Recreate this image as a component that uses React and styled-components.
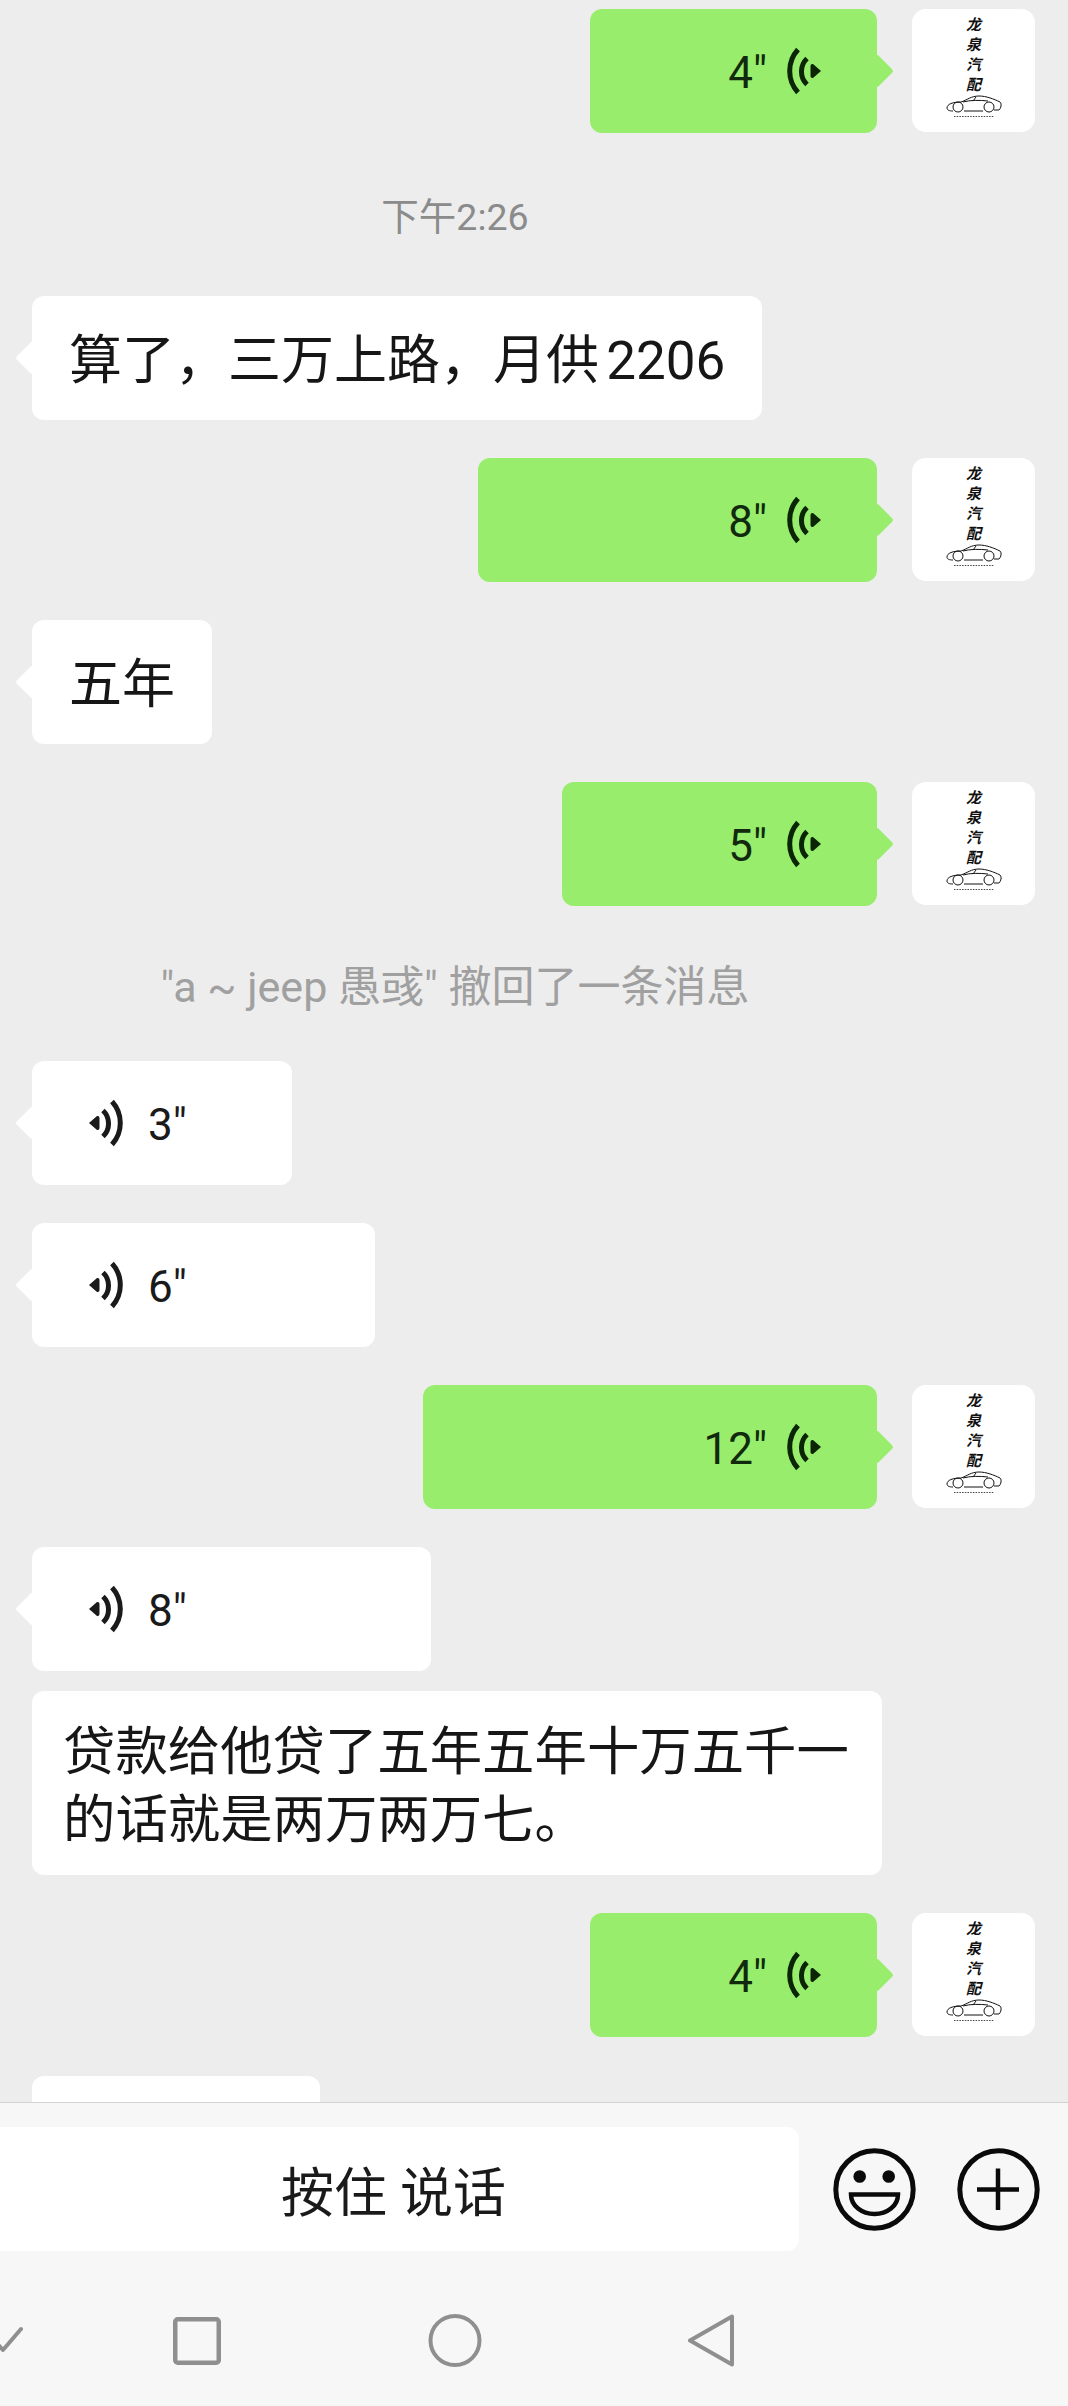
import React from "react";
import styled, { createGlobalStyle } from "styled-components";

const Global = createGlobalStyle`
  html, body { margin: 0; padding: 0; background: #ededed; }
  * { box-sizing: border-box; }
`;

const FONT = `Roboto, "Noto Sans CJK SC", sans-serif`;

const Page = styled.div`
  width: 1068px;
  height: 2406px;
  display: flex;
  flex-direction: column;
  overflow: hidden;
  background: #ededed;
  font-family: ${FONT};
  color: #161616;
`;

const Chat = styled.div`
  height: 2102px;
  flex: none;
  overflow: hidden;
  padding: 9px 33px 0 32px;
  display: flex;
  flex-direction: column;
`;

const Row = styled.div`
  flex: none;
  display: flex;
  justify-content: ${(p) => (p.$mine ? "flex-end" : "flex-start")};
  gap: 35px;
  margin-top: ${(p) => p.$top ?? 38}px;
`;

const Bubble = styled.div`
  position: relative;
  flex: none;
  height: ${(p) => p.$h ?? 124}px;
  width: ${(p) => (p.$w ? `${p.$w}px` : "auto")};
  border-radius: 12px;
  background: ${(p) => (p.$mine ? "#98ed6c" : "#ffffff")};
  display: flex;
  align-items: center;
  justify-content: ${(p) => (p.$mine ? "flex-end" : "flex-start")};
  padding: ${(p) => (p.$mine ? "0 56px 0 0" : "0 0 0 57px")};

  &::after {
    content: "";
    position: absolute;
    top: 50%;
    ${(p) => (p.$mine ? "right: -12px;" : "left: -12px;")}
    width: 24px;
    height: 24px;
    margin-top: -12px;
    border-radius: 3px;
    transform: rotate(45deg);
    background: inherit;
  }
`;

const TextBubble = styled(Bubble)`
  padding: 6px 37px 0 37px;
  font-size: 53px;
  line-height: 68px;
  word-spacing: -6px;
  white-space: nowrap;
`;

const LongBubble = styled.div`
  flex: none;
  width: 850px;
  height: 184px;
  padding: 27px 30px 0 31px;
  border-radius: 12px;
  background: #ffffff;
  font-size: 52.4px;
  line-height: 68px;
`;

const Duration = styled.span`
  font-size: 44px;
  font-weight: 400;
  line-height: 1;
  margin-top: 3px;
  color: ${(p) => (p.$mine ? "#11290c" : "#1a1a1a")};
`;

const VoiceSvg = styled.svg`
  flex: none;
  width: 34px;
  height: 48px;
  margin: ${(p) => (p.$mine ? "0 0 0 20px" : "0 25px 0 0")};
  transform: ${(p) => (p.$mine ? "scaleX(-1)" : "none")};
  color: ${(p) => (p.$mine ? "#0b2607" : "#1a1a1a")};
`;

const Avatar = styled.div`
  flex: none;
  width: 123px;
  height: 123px;
  border-radius: 14px;
  background: #ffffff;
  padding-top: 6px;
  display: flex;
  flex-direction: column;
  align-items: center;
  font-size: 15px;
  line-height: 20px;
  font-weight: 700;
  font-style: italic;
  color: #111111;
`;

const CarSvg = styled.svg`
  flex: none;
  width: 56px;
  height: 24px;
`;

const TimeStamp = styled.div`
  flex: none;
  margin: 59px 0 54px;
  text-align: center;
  padding-right: 157px;
  font-size: 37.5px;
  line-height: 50px;
  color: #8b8b8b;
`;

const Notice = styled.div`
  flex: none;
  margin: 56px 0 49px;
  text-align: center;
  padding-right: 157px;
  font-size: 43px;
  line-height: 50px;
  color: #a0a0a0;
`;

const InputBar = styled.div`
  flex: none;
  height: 149px;
  border-top: 1px solid #d2d2d2;
  background: #f7f7f7;
  padding-top: 24px;
  display: flex;
  align-items: flex-start;
`;

const HoldButton = styled.div`
  flex: none;
  width: 799px;
  height: 124px;
  background: #ffffff;
  border-radius: 0 12px 12px 0;
  display: flex;
  align-items: center;
  justify-content: center;
  padding-right: 12px;
  font-size: 53px;
  color: #1a1a1a;
`;

const RoundIcon = styled.svg`
  flex: none;
  width: 83px;
  height: 83px;
  margin-top: 21px;
  margin-left: ${(p) => p.$left}px;
`;

const NavBar = styled.div`
  flex: 1;
  background: #f7f7f7;
  padding-top: 63px;
  display: grid;
  grid-template-columns: 173px 255px 260px auto;
  align-items: center;
  align-content: start;
  justify-items: start;
`;

const NavSvg = styled.svg`
  display: block;
  width: ${(p) => p.$w}px;
  height: ${(p) => p.$h}px;
`;

function VoiceIcon({ mine }) {
  return (
    <VoiceSvg $mine={mine} viewBox="0 0 34 48">
      <path d="M0 24 L8 17 Q10.5 16.5 10.5 19 V29 Q10.5 31.5 8 31 Z" fill="currentColor" />
      <path d="M14 11.5 A18 18 0 0 1 14 37.5" fill="none" stroke="currentColor" strokeWidth="5" />
      <path d="M23 2.5 A32 32 0 0 1 23 45.5" fill="none" stroke="currentColor" strokeWidth="5" />
    </VoiceSvg>
  );
}

function Logo() {
  return (
    <Avatar>
      <span>龙</span>
      <span>泉</span>
      <span>汽</span>
      <span>配</span>
      <CarSvg viewBox="0 0 56 24">
        <g fill="none" stroke="#111" strokeWidth="1">
          <path d="M1 13 C1 9 7 7 15 7 C21 5 25 1 33 1 C40 1 48 4 54 7 C56 9 55 13 53 15 L48 15 M37 16 H18 M7 16 C3 16 1 15 1 13" />
          <path d="M17 7 C24 5 34 5 42 6 M30 2 L27 6" />
          <circle cx="12" cy="12" r="5" />
          <circle cx="43" cy="12" r="5" />
        </g>
        <path d="M8 21.5 H48" stroke="#444" strokeWidth="1.2" strokeDasharray="1.5 1.2" fill="none" />
      </CarSvg>
    </Avatar>
  );
}

function Sent({ w, sec, top }) {
  return (
    <Row $mine $top={top}>
      <Bubble $mine $w={w}>
        <Duration $mine>{sec}"</Duration>
        <VoiceIcon mine />
      </Bubble>
      <Logo />
    </Row>
  );
}

function Received({ w, sec, top }) {
  return (
    <Row $top={top}>
      <Bubble $w={w}>
        <VoiceIcon />
        <Duration>{sec}"</Duration>
      </Bubble>
    </Row>
  );
}

function Said({ children, top }) {
  return (
    <Row $top={top}>
      <TextBubble>{children}</TextBubble>
    </Row>
  );
}

export default function App() {
  return (
    <Page>
      <Global />
      <Chat>
        <Sent w={287} sec={4} top={0} />
        <TimeStamp>下午2:26</TimeStamp>
        <Said top={0}>算了，三万上路，月供 2206</Said>
        <Sent w={399} sec={8} />
        <Said>五年</Said>
        <Sent w={315} sec={5} />
        <Notice>"a ~ jeep 愚彧" 撤回了一条消息</Notice>
        <Received w={260} sec={3} top={0} />
        <Received w={343} sec={6} />
        <Sent w={454} sec={12} />
        <Received w={399} sec={8} />
        <Row $top={20}>
          <LongBubble>贷款给他贷了五年五年十万五千一的话就是两万两万七。</LongBubble>
        </Row>
        <Sent w={287} sec={4} />
        <Row $top={39}>
          <Bubble $w={288} />
        </Row>
      </Chat>
      <InputBar>
        <HoldButton>按住 说话</HoldButton>
        <RoundIcon $left={34} viewBox="0 0 83 83">
          <circle cx="41.5" cy="41.5" r="38.7" fill="none" stroke="#0a0a0a" strokeWidth="5" />
          <circle cx="26.7" cy="28.5" r="6.3" fill="#0a0a0a" />
          <circle cx="55.7" cy="28.5" r="6.3" fill="#0a0a0a" />
          <path d="M18 46.5 H65 C65 58 54 66 41.5 66 C29 66 18 58 18 46.5 Z" fill="none" stroke="#0a0a0a" strokeWidth="4.5" />
        </RoundIcon>
        <RoundIcon $left={41} viewBox="0 0 83 83">
          <circle cx="41.5" cy="41.5" r="38.7" fill="none" stroke="#0a0a0a" strokeWidth="5" />
          <path d="M20 41.5 H62 M41 20.5 V62" fill="none" stroke="#0a0a0a" strokeWidth="4.5" />
        </RoundIcon>
      </InputBar>
      <NavBar>
        <NavSvg $w={24} $h={53} viewBox="0 0 24 53">
          <path d="M21 15 L3 36 L-6 26" fill="none" stroke="#8f8f8f" strokeWidth="4" strokeLinecap="round" strokeLinejoin="round" />
        </NavSvg>
        <NavSvg $w={48} $h={48} viewBox="0 0 48 48">
          <rect x="2.25" y="2.25" width="43.5" height="43.5" rx="2.5" fill="none" stroke="#8f8f8f" strokeWidth="4.5" />
        </NavSvg>
        <NavSvg $w={54} $h={53} viewBox="0 0 54 53">
          <circle cx="27" cy="26.5" r="24.5" fill="none" stroke="#8f8f8f" strokeWidth="4" />
        </NavSvg>
        <NavSvg $w={46} $h={53} viewBox="0 0 46 53">
          <path d="M44 2.5 L2 26.5 L44 50.5 Z" fill="none" stroke="#8f8f8f" strokeWidth="4" strokeLinejoin="round" />
        </NavSvg>
      </NavBar>
    </Page>
  );
}
